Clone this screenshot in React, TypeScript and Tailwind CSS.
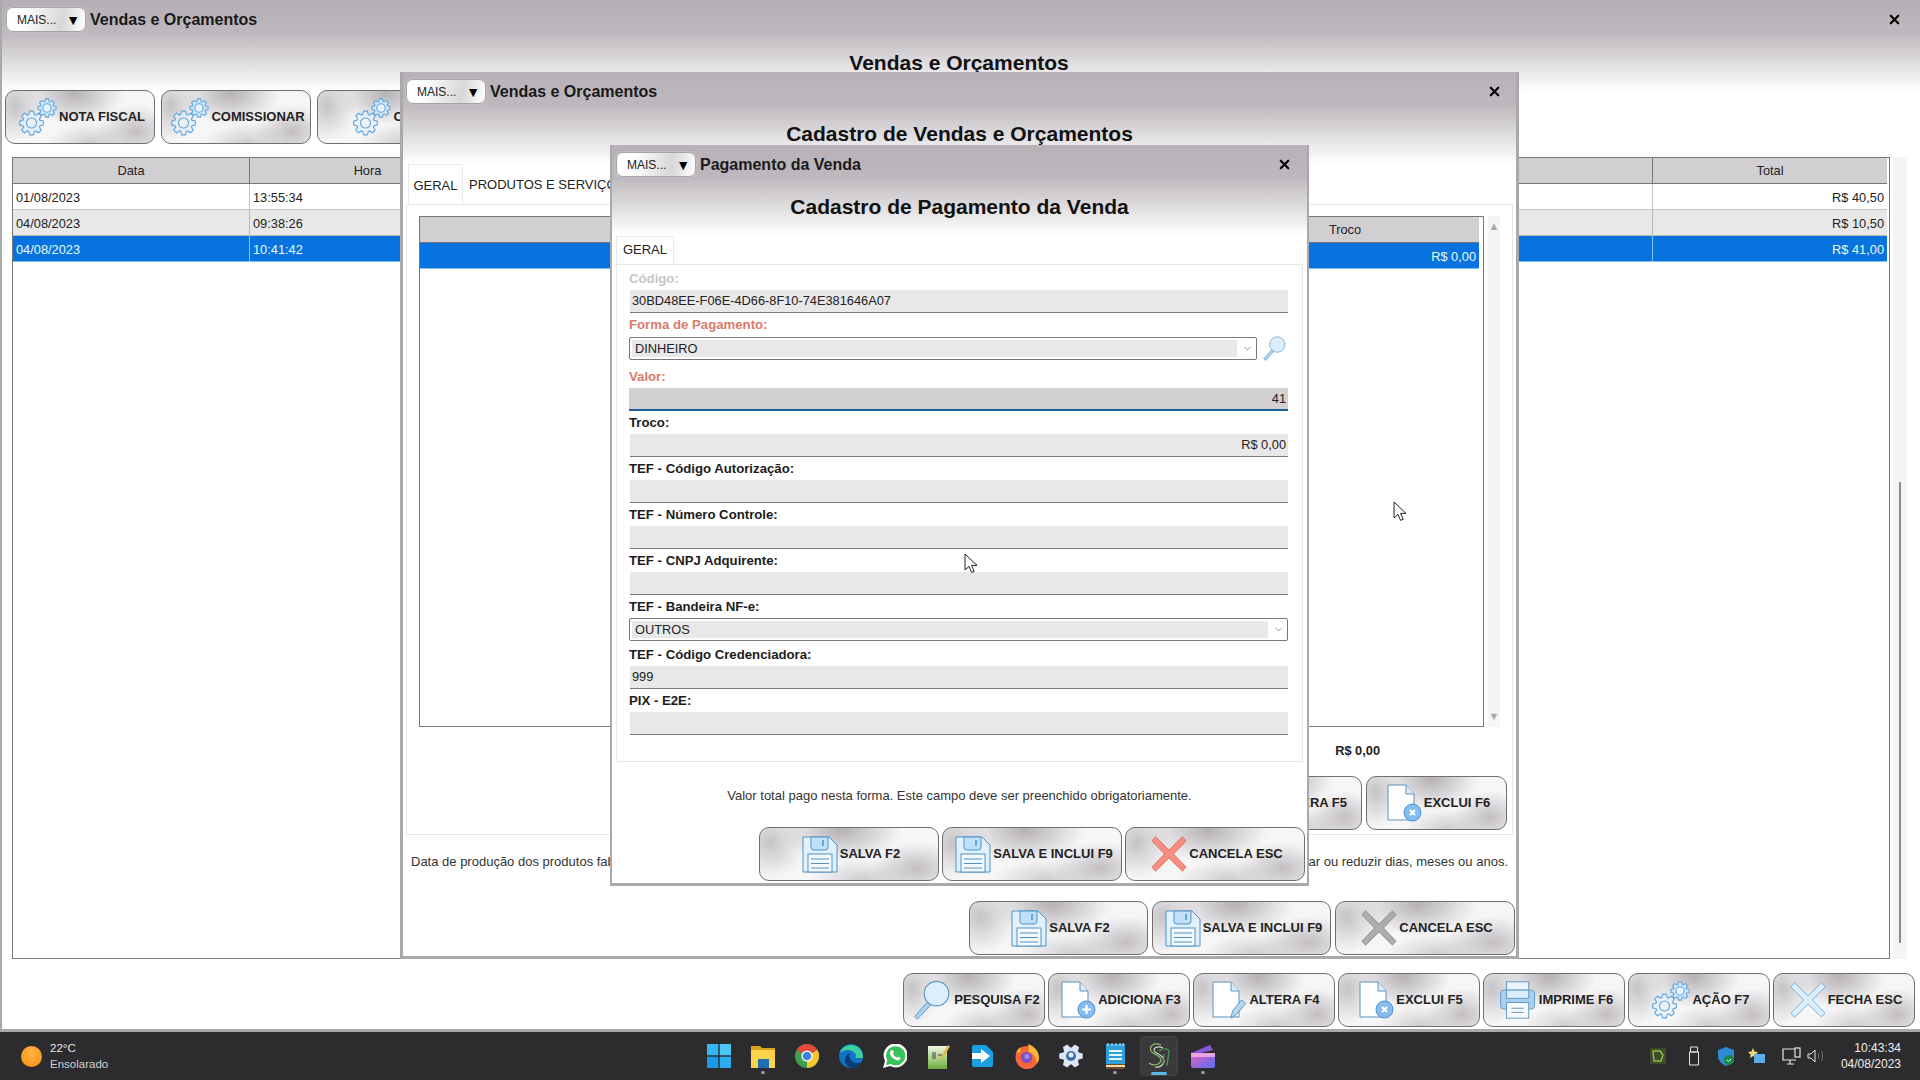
import type { ReactNode } from "react";
import { X, ChevronDown } from "lucide-react";

const metal =
  "bg-[radial-gradient(ellipse_34%_62%_at_46%_4%,#b5b1b5_0%,transparent_100%),radial-gradient(ellipse_26%_52%_at_88%_78%,#c2bec2_0%,transparent_100%),radial-gradient(ellipse_20%_70%_at_6%_28%,#c6c3c6_0%,transparent_100%),radial-gradient(ellipse_30%_40%_at_58%_100%,#cfcccf_0%,transparent_100%),linear-gradient(#f7f6f7,#f7f6f7)]";

function gearPath(cx: number, cy: number, r1: number, r2: number, teeth: number) {
  const pts: string[] = [];
  const step = (Math.PI * 2) / teeth;
  for (let i = 0; i < teeth; i++) {
    const a = i * step;
    const add = (r: number, t: number) =>
      pts.push(`${(cx + r * Math.cos(a + t * step)).toFixed(2)} ${(cy + r * Math.sin(a + t * step)).toFixed(2)}`);
    add(r1, -0.42);
    add(r2, -0.2);
    add(r2, 0.2);
    add(r1, 0.42);
  }
  return "M" + pts.join("L") + "Z";
}

function GearsIcon() {
  return (
    <svg width="38" height="38" viewBox="0 0 38 38" fill="none" stroke="#5fa6dd" strokeWidth="1.1">
      <path d={gearPath(12.5, 25, 8.8, 12, 8)} fill="#e3f0fb" fillOpacity="0.7" />
      <circle cx="12.5" cy="25" r="5" fill="#f4f4f4" fillOpacity="0.6" />
      <path d={gearPath(28, 10, 6.8, 9.2, 8)} fill="#cfe5f8" />
      <circle cx="28" cy="10" r="4.2" fill="#e6f1fa" />
    </svg>
  );
}

function DocIcon({ badge }: { badge?: "plus" | "x" | "pen" }) {
  return (
    <svg width="35" height="38" viewBox="0 0 35 38" fill="none">
      <path d="M1 1h18l8 9v26H1z" fill="#fff" stroke="#5d93bd" />
      <path d="M19 1v9h8" fill="#dcebf7" stroke="#5d93bd" />
      {badge === "plus" && (
        <g>
          <circle cx="25.500" cy="28.500" r="8.500" fill="#86bdf0" stroke="#4a8fd0" />
          <path d="M25.500 24v9M21 28.500h9" stroke="#fff" strokeWidth="2.200" />
        </g>
      )}
      {badge === "x" && (
        <g>
          <circle cx="25.500" cy="28.500" r="8.500" fill="#86bdf0" stroke="#4a8fd0" />
          <path d="M23 26l5 5M28 26l-5 5" stroke="#fff" strokeWidth="2" />
        </g>
      )}
      {badge === "pen" && <path d="M19 37l1.500-7 9-11 4 3.500-9 11z" fill="#b6d7f2" stroke="#5d93bd" />}
    </svg>
  );
}

function SearchIcon({ size = 40 }: { size?: number }) {
  return (
    <svg width={size} height={size} viewBox="0 0 44 44" fill="none">
      <path d="M3 40l14-16 4 3L6 43z" fill="#a9d0f2" stroke="#5d93bd" />
      <circle cx="27" cy="15" r="13.500" fill="#dcedfb" stroke="#5d93bd" strokeWidth="1.200" />
    </svg>
  );
}

function SaveIcon() {
  return (
    <svg width="36" height="37" viewBox="0 0 36 37" fill="none" stroke="#4c93c7" strokeWidth="1">
      <path d="M1 1h26l8 8v27H1z" fill="#e2f0fb" />
      <path d="M9 1h17v10a3 3 0 0 1-3 3H12a3 3 0 0 1-3-3z" fill="#bfe0f8" />
      <path d="M21 4v6" strokeWidth="1.500" />
      <rect x="6" y="18" width="24" height="18" fill="#f6f9fc" />
      <path d="M9 23h18M9 27.500h18M9 32h18" />
    </svg>
  );
}

function PrinterIcon() {
  return (
    <svg width="38" height="38" viewBox="0 0 44 46" fill="none" stroke="#5d93bd" strokeWidth="1.100">
      <rect x="8" y="1" width="27" height="22" fill="#eaf4fc" />
      <rect x="1" y="11" width="41" height="23" rx="4" fill="#a9d0f2" />
      <rect x="8" y="11" width="27" height="10" fill="#dcedfb" />
      <rect x="8" y="26" width="27" height="19" fill="#f5f9fd" />
      <path d="M14 33h15M14 38h15" />
    </svg>
  );
}

function CrossIcon({ fill, stroke }: { fill: string; stroke: string }) {
  return (
    <svg width="36" height="36" viewBox="0 0 40 44" preserveAspectRatio="none">
      <path
        d="M5 1l15 16L35 1l4 5-14 16 14 16-4 5-15-16L5 43l-4-5 14-16L1 6z"
        fill={fill}
        stroke={stroke}
        strokeLinejoin="round"
      />
    </svg>
  );
}

function ActionButton({ icon, label, className }: { icon: ReactNode; label: string; className: string }) {
  return (
    <div
      className={`${metal} ${className} flex h-[54px] shrink-0 items-center justify-center gap-[2px] rounded-[10px] border border-[#6f6f6f] pl-[4px] text-[13px] font-bold whitespace-nowrap text-[#222]`}
    >
      {icon}
      <span>{label}</span>
    </div>
  );
}

function MaisButton() {
  return (
    <div className="flex h-[25px] w-[80px] items-center justify-between rounded-[7px] border border-[#a5a5a5] bg-[linear-gradient(100deg,#fff_20%,#d9d7d9_70%,#fff_100%)] pr-[5px] pl-[10px] text-[12px] text-[#222] shadow-[0_0_1px_#fff]">
      <span>MAIS...</span>
      <span className="text-[14px] leading-none text-black">▼</span>
    </div>
  );
}

function TitleRow({ title }: { title: string }) {
  return (
    <div className="flex h-[25px] items-center gap-[4px]">
      <MaisButton />
      <span className="text-[16px] font-bold text-[#1a1a1a]">{title}</span>
      <X className="ml-auto text-black" size={15} strokeWidth={3.4} />
    </div>
  );
}

const cellText = "flex items-center px-[3px] pt-[2px] text-[12.8px] whitespace-nowrap";

function GridHeader({ cols }: { cols: string[] }) {
  return (
    <>
      {cols.map((c, i) => (
        <div
          key={i}
          className={`flex h-[26px] items-center justify-center border-b border-[#777] bg-[#d2cfd2] pt-[1px] text-[12.8px] text-[#222] ${i < cols.length - 1 ? "border-r" : ""}`}
        >
          {c}
        </div>
      ))}
    </>
  );
}

function Row({ cells, kind }: { cells: string[]; kind: "plain" | "alt" | "sel" }) {
  const bg =
    kind === "sel"
      ? "bg-[#0873de] text-[#e6fbff] border-[#7cc4f2]"
      : kind === "alt"
        ? "bg-[#e8e8e8] text-[#222] border-[#b8b8b8]"
        : "bg-white text-[#222] border-[#c4c4c4]";
  return (
    <>
      {cells.map((c, i) => (
        <div
          key={i}
          className={`${cellText} h-[26px] border-b ${bg} ${i < cells.length - 1 ? "border-r" : ""} ${i === cells.length - 1 ? "justify-end" : ""}`}
        >
          {c}
        </div>
      ))}
    </>
  );
}

function Field({
  label,
  value,
  tone = "bold",
  align = "left",
  focus = false,
}: {
  label: string;
  value?: string;
  tone?: "bold" | "required" | "disabled";
  align?: "left" | "right";
  focus?: boolean;
}) {
  return (
    <div>
      <FieldLabel label={label} tone={tone} />
      <div
        className={`flex h-[23px] items-center px-[2px] text-[12.8px] text-[#222] ${align === "right" ? "justify-end" : ""} ${
          focus ? "border-b-2 border-[#1a5f9e] bg-[#d3d0d3]" : "ml-[1px] border-b border-[#777] bg-[#e8e8e8]"
        }`}
      >
        {value}
      </div>
    </div>
  );
}

function FieldLabel({ label, tone }: { label: string; tone: "bold" | "required" | "disabled" }) {
  const color = tone === "required" ? "text-[#d97b6c]" : tone === "disabled" ? "text-[#c6c6c6]" : "text-[#1c1c1c]";
  return <div className={`flex h-[23px] items-center text-[13.2px] font-bold ${color}`}>{label}</div>;
}

function SelectBox({ value, className }: { value: string; className: string }) {
  return (
    <div className={`flex h-[23px] items-stretch rounded-[2px] border border-[#777] bg-white py-[2px] pl-[2px] ${className}`}>
      <div className="flex flex-1 items-center bg-[#e8e8e8] px-[3px] text-[12.8px] text-[#222]">{value}</div>
      <div className="flex w-[19px] items-center justify-end pr-[3px] text-[#666]">
        <ChevronDown size={11} strokeWidth={1.5} />
      </div>
    </div>
  );
}

function Cursor({ className }: { className: string }) {
  return (
    <svg className={`absolute ${className}`} width="14" height="21" viewBox="0 0 14 21">
      <path d="M1 1v16l4-3.600 2.600 6 2.600-1.100-2.600-5.900h5.400z" fill="#fff" stroke="#222" strokeWidth="1" strokeLinejoin="round" />
    </svg>
  );
}

function WinIcon() {
  return (
    <svg width="24" height="24" viewBox="0 0 24 24">
      <rect x="0" y="0" width="11.300" height="11.300" fill="#35b5f4" />
      <rect x="12.700" y="0" width="11.300" height="11.300" fill="#4cc6f7" />
      <rect x="0" y="12.700" width="11.300" height="11.300" fill="#1d98e6" />
      <rect x="12.700" y="12.700" width="11.300" height="11.300" fill="#2eaaf0" />
    </svg>
  );
}

function FolderIcon() {
  return (
    <svg width="24" height="24" viewBox="0 0 24 24">
      <path d="M0 2h9l2 2h13v19H0z" fill="#d9a21c" />
      <rect x="0" y="6" width="24" height="18" fill="#fbd34d" />
      <rect x="7" y="15" width="11" height="9" fill="#1f6fb5" />
    </svg>
  );
}

function ChromeIcon() {
  return (
    <svg width="24" height="24" viewBox="0 0 24 24">
      <circle cx="12" cy="12" r="12" fill="#3fa14f" />
      <path d="M12 12L1.600 6A12 12 0 0 1 22.400 6z" fill="#e2483b" />
      <path d="M12 12l10.400-6A12 12 0 0 1 12 24z" fill="#f7c52e" />
      <circle cx="12" cy="12" r="5.600" fill="#fff" />
      <circle cx="12" cy="12" r="4.300" fill="#3b82e4" />
    </svg>
  );
}

function EdgeIcon() {
  return (
    <svg width="24" height="24" viewBox="0 0 24 24">
      <circle cx="12" cy="12" r="12" fill="#0f74c5" />
      <path d="M24 13c0-7-5-12-12-12C6 1 2 5 1 9c3-3 8-4 12-2 4 2 5 5 3 7h8z" fill="#3ecf9e" />
      <path d="M14 24c-5 0-8-4-8-8 0-3 2-6 5-7-1 2-1 5 1 7 2 3 6 4 10 2-2 4-5 6-8 6z" fill="#0a3d78" />
    </svg>
  );
}

function WhatsIcon() {
  return (
    <svg width="24" height="24" viewBox="0 0 24 24">
      <path d="M0 24l2-7A12 12 0 1 1 7 22z" fill="#fff" />
      <path d="M3 21l1.300-4.600A9.600 9.600 0 1 1 7.800 20z" fill="#37c25b" />
      <path d="M8 6.500c1-1 2-.5 2.500 1 .4 1 0 1.500-.5 2.200.8 1.700 2 2.900 3.800 3.800.7-.6 1.200-1 2.200-.6 1.500.7 2 1.500 1 2.600-1.500 1.500-4 1-6.800-1.200C7 12 6 8.500 8 6.500z" fill="#fff" />
    </svg>
  );
}

function SheetIcon() {
  return (
    <svg width="22" height="25" viewBox="0 0 22 25">
      <defs>
        <linearGradient id="sh" x1="0" y1="0" x2="0" y2="1">
          <stop offset="0" stopColor="#f4f7e4" />
          <stop offset="1" stopColor="#6cae3c" />
        </linearGradient>
      </defs>
      <rect x="0" y="2" width="19" height="23" fill="url(#sh)" />
      <path d="M5 8v7M7 8v7M10 11h4" stroke="#333" strokeWidth="0.900" />
      <path d="M13 13L20 1l2 1.500-7 12z" fill="#e5b84a" />
    </svg>
  );
}

function ArrowDocIcon() {
  return (
    <svg width="24" height="24" viewBox="0 0 24 24">
      <path d="M3 1h12l7 7v13a2 2 0 0 1-2 2H3a2 2 0 0 1-2-2V3a2 2 0 0 1 2-2z" fill="#1b9ee2" />
      <path d="M1 9h9V5l9 7-9 7v-4H1z" fill="#fff" />
    </svg>
  );
}

function FirefoxIcon() {
  return (
    <svg width="24" height="25" viewBox="0 0 24 25">
      <circle cx="12" cy="13.500" r="11.500" fill="#f2663a" />
      <path d="M13 0c6 2 11 7 11 13.500 0 3-1 5-2 6-1-7-4-10-9-12 1-2 1-4 0-7.500z" fill="#fbb73a" />
      <path d="M1 9c1-3 3-5 5-6-1 2-1 4 0 5z" fill="#fbb73a" />
      <circle cx="11.500" cy="13.500" r="5.500" fill="#7b4fc7" />
      <circle cx="12" cy="12.500" r="2.500" fill="#a98ae6" />
    </svg>
  );
}

function GearTaskIcon() {
  return (
    <svg width="24" height="24" viewBox="0 0 24 24">
      <path d={gearPath(12, 12, 8.500, 12, 6)} fill="#dbe6f6" />
      <circle cx="12" cy="12" r="5" fill="#3d6fb0" />
      <circle cx="12" cy="11" r="2.500" fill="#e9f0fa" />
    </svg>
  );
}

function NotepadIcon() {
  return (
    <svg width="19" height="26" viewBox="0 0 19 26">
      <rect x="0" y="1" width="19" height="25" rx="1" fill="#6b4a2a" />
      <rect x="0" y="1" width="19" height="20" fill="#2f9fdc" />
      <rect x="0" y="22" width="19" height="2" fill="#f2d9a2" />
      <path d="M3 8h13M3 12h13M3 16h13" stroke="#e9f5fc" strokeWidth="1.800" />
      <path d="M2 0v3M6 0v3M10 0v3M14 0v3M17 0v3" stroke="#d6ecfa" />
    </svg>
  );
}

function SLogo() {
  return (
    <svg width="24" height="28" viewBox="0 0 24 28" fill="none" strokeWidth="1.200">
      <path d="M14 3C7 0 2 4 4 9c2 4 10 4 10 9 0 4-7 7-12 3" stroke="#8ec06c" />
      <path d="M16 6c-4-2-9-1-9 2 0 4 10 4 10 11 0 4-5 7-9 6" stroke="#c8d8c0" />
      <path d="M12 9c3-3 9-3 10 0l-2 15M17 12l-1 11" stroke="#4f9a5a" />
    </svg>
  );
}

function ClapperIcon() {
  return (
    <svg width="26" height="25" viewBox="0 0 26 25">
      <defs>
        <linearGradient id="cl" x1="0" y1="0" x2="1" y2="1">
          <stop offset="0" stopColor="#e55fc0" />
          <stop offset="1" stopColor="#5a6ff0" />
        </linearGradient>
      </defs>
      <path d="M1 9L20 1l3 5-16 4z" fill="#8a57d8" />
      <rect x="1" y="9" width="24" height="15" rx="2" fill="url(#cl)" />
      <rect x="1" y="9" width="24" height="4" fill="#e8a4e2" />
    </svg>
  );
}

function TaskItem({ children, dot, active }: { children: ReactNode; dot?: boolean; active?: boolean }) {
  return (
    <div className="relative flex h-[48px] w-[44px] items-center justify-center">
      {active && (
        <span className="absolute inset-x-[3px] inset-y-[4px] rounded-[4px] border border-[#444] bg-[#3a393c]" />
      )}
      <span className="relative flex">{children}</span>
      {dot && <span className="absolute bottom-[6px] left-[20px] h-[3px] w-[4px] rounded-full bg-[#9a9a9a]" />}
      {active && <span className="absolute bottom-[5px] left-[14px] h-[3px] w-[16px] rounded-full bg-[#5bb8ee]" />}
    </div>
  );
}

function Taskbar() {
  return (
    <div className="flex h-[48px] shrink-0 items-center bg-[#2c2b2e] text-[11.500px] text-[#e8e8e8]">
      <div className="flex w-[697px] items-center pl-[21px]">
        <span className="h-[21px] w-[21px] rounded-full bg-[radial-gradient(circle_at_50%_35%,#ffb53e,#f58a14)]" />
        <div className="ml-[8px] leading-[16px]">
          <div>22°C</div>
          <div className="text-[#d0d0d0]">Ensolarado</div>
        </div>
      </div>
      <div className="flex">
        <TaskItem><WinIcon /></TaskItem>
        <TaskItem dot><FolderIcon /></TaskItem>
        <TaskItem><ChromeIcon /></TaskItem>
        <TaskItem><EdgeIcon /></TaskItem>
        <TaskItem><WhatsIcon /></TaskItem>
        <TaskItem><SheetIcon /></TaskItem>
        <TaskItem><ArrowDocIcon /></TaskItem>
        <TaskItem><FirefoxIcon /></TaskItem>
        <TaskItem><GearTaskIcon /></TaskItem>
        <TaskItem dot><NotepadIcon /></TaskItem>
        <TaskItem active><SLogo /></TaskItem>
        <TaskItem dot><ClapperIcon /></TaskItem>
      </div>
      <div className="ml-auto flex items-center gap-[17px] pr-[19px]">
        <svg width="16" height="16" viewBox="0 0 16 16">
          <rect width="16" height="16" fill="#3c4a2e" />
          <path d="M3 3h7l3 4-2 6H4z" fill="none" stroke="#8fc23a" strokeWidth="1.400" />
        </svg>
        <svg className="ml-[5px]" width="12" height="20" viewBox="0 0 12 20" fill="none" stroke="#e6e6e6">
          <path d="M2.500 1h7v5h-7zM1.500 6h9v13h-9z" />
        </svg>
        <svg width="18" height="19" viewBox="0 0 18 19">
          <path d="M9 0l8 3v7c0 4-4 7-8 9-4-2-8-5-8-9V3z" fill="#2c8ad0" />
          <circle cx="12" cy="13" r="5" fill="#1a8a48" />
          <path d="M10 13l1.500 1.500L14 12" stroke="#fff" fill="none" />
        </svg>
        <svg className="-ml-[4px]" width="17" height="16" viewBox="0 0 17 16">
          <path d="M5 0l1.500 3.500L10 4 7.500 6.500 8 10 5 8 2 10l.5-3.500L0 4l3.500-.5z" fill="#f0d776" />
          <rect x="6" y="6" width="11" height="9" fill="#5caee8" />
        </svg>
        <div className="flex items-center gap-[5px]">
          <svg width="20" height="19" viewBox="0 0 20 19" fill="none" stroke="#e6e6e6" strokeWidth="1.200">
            <path d="M13 2H1v11h13M5 17h7M8 13v4" />
            <rect x="13" y="1" width="5" height="9" />
          </svg>
          <svg width="17" height="14" viewBox="0 0 17 14" fill="none" stroke="#e6e6e6">
            <path d="M1 5h3l4-4v12l-4-4H1z" />
            <path d="M11 4c1 2 1 4 0 6M14 2c2 3 2 7 0 10" stroke="#777" />
          </svg>
        </div>
        <div className="text-right text-[12px] leading-[16px] text-[#eee]">
          <div>10:43:34</div>
          <div>04/08/2023</div>
        </div>
      </div>
    </div>
  );
}

function MainWindow() {
  return (
    <div className="flex min-h-0 flex-1 flex-col border-b-[3px] border-l-2 border-[#a9a9a9] bg-[linear-gradient(180deg,#b5afb5_0px,#bdb8bd_32px,#ffffff_92px)] pb-[2px]">
      <div className="pt-[7px] pr-[18px] pl-[4px]">
        <TitleRow title="Vendas e Orçamentos" />
      </div>
      <h1 className="mt-[19px] mr-[4px] h-[24px] text-center text-[21px] leading-[24px] font-bold text-[#111]">
        Vendas e Orçamentos
      </h1>
      <div className="mt-[15px] flex gap-[6px] pl-[3px]">
        <ActionButton className="w-[150px]" icon={<GearsIcon />} label="NOTA FISCAL" />
        <ActionButton className="w-[150px]" icon={<GearsIcon />} label="COMISSIONAR" />
        <ActionButton className="w-[150px]" icon={<GearsIcon />} label="COPIA" />
      </div>
      <div className="mt-[13px] flex min-h-0 flex-1 pr-[13px] pl-[10px]">
        <div className="min-h-0 flex-1 border border-[#777] pr-[2px]">
          <div className="grid grid-cols-[237px_236px_1fr_234px] content-start">
            <GridHeader cols={["Data", "Hora", "", "Total"]} />
            <Row kind="plain" cells={["01/08/2023", "13:55:34", "", "R$ 40,50"]} />
            <Row kind="alt" cells={["04/08/2023", "09:38:26", "", "R$ 10,50"]} />
            <Row kind="sel" cells={["04/08/2023", "10:41:42", "", "R$ 41,00"]} />
          </div>
        </div>
        <div className="ml-[3px] flex w-[14px] flex-col bg-[#f4f4f4] pt-[325px] pb-[16px]">
          <div className="mx-auto w-[2px] flex-1 bg-[#8a8a8a]" />
        </div>
      </div>
      <div className="mt-[14px] flex justify-end gap-[3px] pr-[5px]">
        <ActionButton className="w-[142px]" icon={<SearchIcon />} label="PESQUISA F2" />
        <ActionButton className="w-[142px]" icon={<DocIcon badge="plus" />} label="ADICIONA F3" />
        <ActionButton className="w-[142px]" icon={<DocIcon badge="pen" />} label="ALTERA F4" />
        <ActionButton className="w-[142px]" icon={<DocIcon badge="x" />} label="EXCLUI F5" />
        <ActionButton className="w-[142px]" icon={<PrinterIcon />} label="IMPRIME F6" />
        <ActionButton className="w-[142px]" icon={<GearsIcon />} label="AÇÃO F7" />
        <ActionButton className="w-[142px]" icon={<CrossIcon fill="#dcedfb" stroke="#6aa9dc" />} label="FECHA ESC" />
      </div>
    </div>
  );
}

function SaleWindow() {
  return (
    <div className="absolute top-[72px] left-[400px] flex h-[887px] w-[1119px] flex-col border-x-[3px] border-b-[3px] border-[#a9a9a9] bg-[linear-gradient(180deg,#b8b2b8_0px,#bdb8bd_32px,#ffffff_92px)]">
      <div className="pt-[7px] pr-[14px] pl-[3px]">
        <TitleRow title="Vendas e Orçamentos" />
      </div>
      <h2 className="mt-[18px] h-[24px] text-center text-[21px] leading-[24px] font-bold text-[#111]">
        Cadastro de Vendas e Orçamentos
      </h2>
      <div className="mt-[18px] flex h-[40px] pl-[5px] text-[13px] text-[#222]">
        <div className="flex w-[55px] items-center justify-center border-x border-t border-[#e8e8e8] pt-[2px]">GERAL</div>
        <div className="flex items-center pt-[2px] pl-[6px] whitespace-nowrap">PRODUTOS E SERVIÇOS</div>
      </div>
      <div className="mx-[3px] flex h-[631px] flex-col border border-[#e8e8e8] px-[12px] pt-[11px]">
        <div className="flex h-[511px]">
          <div className="w-[1065px] border border-[#777] pr-[4px]">
            <div className="grid grid-cols-[1fr_268px]">
              <GridHeader cols={["", "Troco"]} />
              <Row kind="sel" cells={["", "R$ 0,00"]} />
            </div>
          </div>
          <div className="ml-[4px] flex w-[12px] flex-col items-center justify-between bg-[#f5f5f5] py-[5px] text-[11px] leading-none text-[#a9a9a9]">
            <span>▲</span>
            <span>▼</span>
          </div>
        </div>
        <div className="flex h-[49px] items-center justify-end pr-[120px] pb-[2px] text-[12.800px] font-bold text-[#222]">
          R$ 0,00
        </div>
        <div className="-mr-[7px] flex justify-end gap-[4px]">
          <ActionButton className="w-[141px]" icon={<DocIcon badge="pen" />} label="ALTERA F5" />
          <ActionButton className="w-[141px]" icon={<DocIcon badge="x" />} label="EXCLUI F6" />
        </div>
      </div>
      <div className="flex h-[53px] items-center justify-between pr-[8px] pl-[8px] text-[13px] whitespace-nowrap text-[#333]">
        <span>Data de produção dos produtos fabricados</span>
        <span>Use as setas para adicionar ou reduzir dias, meses ou anos.</span>
      </div>
      <div className="mt-[13px] flex justify-end gap-[4px] pr-[1px]">
        <ActionButton className="w-[179px]" icon={<SaveIcon />} label="SALVA F2" />
        <ActionButton className="w-[179px]" icon={<SaveIcon />} label="SALVA E INCLUI F9" />
        <ActionButton className="w-[180px]" icon={<CrossIcon fill="#adadad" stroke="#8c8c8c" />} label="CANCELA ESC" />
      </div>
    </div>
  );
}

function PaymentWindow() {
  return (
    <div className="absolute top-[145px] left-[610px] flex h-[741px] w-[699px] flex-col border-x-2 border-b-[3px] border-[#a9a9a9] bg-[linear-gradient(180deg,#b8b2b8_0px,#bdb8bd_32px,#ffffff_90px)]">
      <div className="pt-[7px] pr-[15px] pl-[4px]">
        <TitleRow title="Pagamento da Venda" />
      </div>
      <h2 className="mt-[18px] h-[24px] text-center text-[21px] leading-[24px] font-bold text-[#111]">
        Cadastro de Pagamento da Venda
      </h2>
      <div className="mt-[17px] ml-[4px] flex h-[28px] w-[58px] items-center justify-center border-x border-t border-[#e8e8e8] pb-[2px] text-[13px] text-[#222]">
        GERAL
      </div>
      <div className="mx-[4px] flex h-[498px] flex-col border border-[#e8e8e8] pt-[2px] pr-[14px] pb-[4px] pl-[12px]">
        <Field label="Código:" value="30BD48EE-F06E-4D66-8F10-74E381646A07" tone="disabled" />
        <FieldLabel label="Forma de Pagamento:" tone="required" />
        <div className="flex items-center gap-[5px]">
          <SelectBox value="DINHEIRO" className="w-[628px]" />
          <SearchIcon size={25} />
        </div>
        <div className="mt-[4px]">
          <Field label="Valor:" value="41" tone="required" align="right" focus />
        </div>
        <Field label="Troco:" value="R$ 0,00" align="right" />
        <Field label="TEF - Código Autorização:" />
        <Field label="TEF - Número Controle:" />
        <Field label="TEF - CNPJ Adquirente:" />
        <FieldLabel label="TEF - Bandeira NF-e:" tone="bold" />
        <SelectBox value="OUTROS" className="w-[659px]" />
        <div className="mt-[2px]">
          <Field label="TEF - Código Credenciadora:" value="999" />
        </div>
        <Field label="PIX - E2E:" />
      </div>
      <div className="flex h-[65px] items-center justify-center pt-[3px] text-[13px] text-[#333]">
        Valor total pago nesta forma. Este campo deve ser preenchido obrigatoriamente.
      </div>
      <div className="flex justify-end gap-[3px] pr-[2px]">
        <ActionButton className="w-[180px]" icon={<SaveIcon />} label="SALVA F2" />
        <ActionButton className="w-[180px]" icon={<SaveIcon />} label="SALVA E INCLUI F9" />
        <ActionButton className="w-[180px]" icon={<CrossIcon fill="#f88d82" stroke="#d86a60" />} label="CANCELA ESC" />
      </div>
    </div>
  );
}

export default function App() {
  return (
    <div className="relative flex h-screen w-full flex-col overflow-hidden bg-white [font-family:'Liberation_Sans',Arial,sans-serif]">
      <MainWindow />
      <Taskbar />
      <SaleWindow />
      <PaymentWindow />
      <Cursor className="top-[501px] left-[1393px]" />
      <Cursor className="top-[553px] left-[964px]" />
    </div>
  );
}
